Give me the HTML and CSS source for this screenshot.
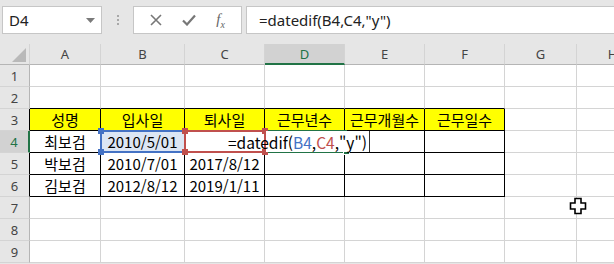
FILE: index.html
```html
<!DOCTYPE html>
<html lang="ko">
<head>
    <meta charset="UTF-8">
    <title>datedif</title>
    <link rel="stylesheet" href="styles.css">
</head>
<body>
    <div class="toolbar">
        <div class="namebox">
            <span>D4</span>
            <svg class="drop" width="9" height="5" viewBox="0 0 9 5"><path d="M0 0h9L4.5 5z" fill="#7a7a7a"/></svg>
        </div>
        <div class="grip"><i></i><i></i><i></i></div>
        <div class="fxbox">
            <svg width="12" height="12" viewBox="0 0 12 12"><path d="M1 1l10 10M11 1L1 11" stroke="#777" stroke-width="1.6"/></svg>
            <svg width="14" height="12" viewBox="0 0 14 12"><path d="M1 6.5l4 4L13 1.5" stroke="#777" stroke-width="2.2" fill="none"/></svg>
            <span class="fx">f<sub>x</sub></span>
        </div>
        <div class="formula">=datedif(B4,C4,"y")</div>
    </div>

    <div class="sheet">
        <div class="c ch corner"><svg width="14" height="14" viewBox="0 0 14 14"><path d="M14 0v14H0z" fill="#b9b9b9"/></svg></div>
        <div class="c ch">A</div><div class="c ch">B</div><div class="c ch">C</div><div class="c ch sel">D</div>
        <div class="c ch">E</div><div class="c ch">F</div><div class="c ch">G</div><div class="c ch">H</div>

        <div class="c rh">1</div>
        <div class="c"></div><div class="c"></div><div class="c"></div><div class="c"></div>
        <div class="c"></div><div class="c"></div><div class="c"></div><div class="c"></div>

        <div class="c rh">2</div>
        <div class="c tt"></div><div class="c tt"></div><div class="c tt"></div><div class="c tt"></div>
        <div class="c tt"></div><div class="c tt"></div><div class="c"></div><div class="c"></div>

        <div class="c rh rt">3</div>
        <div class="c t head">성명</div><div class="c t head">입사일</div><div class="c t head">퇴사일</div>
        <div class="c t head">근무년수</div><div class="c t head">근무개월수</div><div class="c t head">근무일수</div>
        <div class="c"></div><div class="c"></div>

        <div class="c rh rsel">4</div>
        <div class="c t">최보검</div><div class="c t ref">2010/5/01</div><div class="c t"></div>
        <div class="c t"></div><div class="c t"></div><div class="c t"></div>
        <div class="c"></div><div class="c"></div>

        <div class="c rh rt">5</div>
        <div class="c t">박보검</div><div class="c t">2010/7/01</div><div class="c t">2017/8/12</div>
        <div class="c t"></div><div class="c t"></div><div class="c t"></div>
        <div class="c"></div><div class="c"></div>

        <div class="c rh rt">6</div>
        <div class="c t">김보검</div><div class="c t">2012/8/12</div><div class="c t">2019/1/11</div>
        <div class="c t"></div><div class="c t"></div><div class="c t"></div>
        <div class="c"></div><div class="c"></div>

        <div class="c rh">7</div>
        <div class="c"></div><div class="c"></div><div class="c"></div><div class="c"></div>
        <div class="c"></div><div class="c"></div><div class="c"></div><div class="c"></div>

        <div class="c rh">8</div>
        <div class="c"></div><div class="c"></div><div class="c"></div><div class="c"></div>
        <div class="c"></div><div class="c"></div><div class="c"></div><div class="c"></div>

        <div class="c rh">9</div>
        <div class="c"></div><div class="c"></div><div class="c"></div><div class="c"></div>
        <div class="c"></div><div class="c"></div><div class="c"></div><div class="c"></div>

        <!-- range highlights while editing D4 -->
        <div class="active"><span class="handle"></span></div>
        <div class="range blue"><i class="tl"></i><i class="tr"></i><i class="bl"></i><i class="br"></i></div>
        <div class="range red"><i class="tl"></i><i class="tr"></i><i class="bl"></i><i class="br"></i></div>
        <div class="editor">=datedif(<b class="rb">B4</b>,<b class="rr">C4</b>,"y")</div>

        <svg class="cursor" width="18" height="18" viewBox="0 0 18 18">
            <path d="M6 1.5h6v4.5h4.5v6H12v4.5H6V12H1.5V6H6z" fill="#fff" stroke="#000" stroke-width="1.6"/>
        </svg>
    </div>
</body>
</html>
```

FILE: styles.css
```css
body {
    margin: 0;
    width: 614px;
    height: 264px;
    overflow: hidden;
    background-color: #e6e6e6;
    font-family: "Noto Sans", "Noto Sans CJK KR", sans-serif;
    color: #222;
}
.toolbar {
    display: flex;
    align-items: flex-start;
    height: 44px;
    padding-top: 6px;
    box-sizing: border-box;
}
.namebox {
    display: flex;
    align-items: center;
    justify-content: space-between;
    width: 100px;
    height: 28px;
    margin-left: 2px;
    padding: 0 6px 0 6px;
    box-sizing: border-box;
    background-color: #fff;
    border: 1px solid #c6c6c6;
    font-size: 15px;
}
.grip {
    width: 31px;
    height: 28px;
    display: flex;
    flex-direction: column;
    align-items: center;
    justify-content: center;
    gap: 2px;
}
.grip i {
    width: 2px;
    height: 2px;
    background-color: #a8a8a8;
}
.fxbox {
    display: flex;
    align-items: center;
    justify-content: space-around;
    width: 109px;
    height: 28px;
    padding: 0 6px;
    box-sizing: border-box;
    background-color: #fff;
    border: 1px solid #c6c6c6;
}
.fx {
    font-family: "Liberation Serif", serif;
    font-style: italic;
    font-size: 15px;
    color: #666;
}
.fx sub {
    font-size: 10px;
}
.formula {
    flex: 1;
    height: 28px;
    margin-left: 4px;
    padding-left: 12px;
    box-sizing: border-box;
    background-color: #fff;
    border: 1px solid #c6c6c6;
    border-right: none;
    font-size: 15px;
    line-height: 26px;
}

.sheet {
    position: relative;
    display: grid;
    grid-template-columns: 30px 71px 84px 80px 80px 80px 80px 72px 72px;
    grid-template-rows: 21px;
    grid-auto-rows: 22px;
    background-color: #fff;
    font-family: "Noto Sans CJK KR", sans-serif;
    font-size: 15px;
    color: #000;
}
.c {
    display: flex;
    align-items: center;
    justify-content: center;
    box-sizing: border-box;
    border-right: 1px solid #d4d4d4;
    border-bottom: 1px solid #d4d4d4;
    white-space: nowrap;
}
.ch {
    background-color: #e6e6e6;
    border-bottom-color: #b5b5b5;
    font-family: "Noto Sans", sans-serif;
    font-size: 13px;
    color: #444;
}
.ch.sel {
    background-color: #d2d2d2;
    border-bottom: 2px solid #217346;
    color: #217346;
}
.corner {
    justify-content: flex-end;
    align-items: flex-end;
    padding: 0 3px 2px 0;
}
.rh {
    background-color: #e6e6e6;
    border-right-color: #b5b5b5;
    font-family: "Noto Sans", sans-serif;
    font-size: 13px;
    color: #444;
}
.rh.rt {
    border-right-color: #000;
}
.rh.rsel {
    background-color: #d2d2d2;
    border-right: 2px solid #217346;
    color: #217346;
}
.tt {
    border-bottom-color: #000;
}
.t {
    border-right-color: #000;
    border-bottom-color: #000;
}
.head {
    background-color: #ffff00;
}
.ref {
    background-color: #dce6f4;
}

.active {
    position: absolute;
    left: 264px;
    top: 86px;
    width: 83px;
    height: 23px;
    box-sizing: border-box;
    border-top: 2px solid #217346;
    border-bottom: 2px solid #217346;
}
.handle {
    position: absolute;
    right: -3px;
    bottom: -4px;
    width: 5px;
    height: 5px;
    background-color: #217346;
    border: 1px solid #fff;
}
.range {
    position: absolute;
    top: 86px;
    height: 23px;
    box-sizing: border-box;
    border: 2px solid;
}
.range.blue {
    left: 100px;
    width: 86px;
    border-color: #4472c4;
}
.range.red {
    left: 184px;
    width: 82px;
    border-color: #c0504d;
}
.range i {
    position: absolute;
    width: 6px;
    height: 6px;
}
.range.blue i { background-color: #4472c4; }
.range.red i { background-color: #c0504d; }
.range .tl { left: -4px; top: -4px; }
.range .tr { right: -4px; top: -4px; }
.range .bl { left: -4px; bottom: -4px; }
.range .br { right: -4px; bottom: -4px; }

.editor {
    position: absolute;
    left: 266px;
    top: 87px;
    width: 104px;
    height: 21px;
    display: flex;
    align-items: center;
    justify-content: flex-end;
    padding-right: 2px;
    box-sizing: border-box;
    background-color: #fff;
    border-right: 1px solid #333;
    white-space: nowrap;
    font-size: 15.5px;
}
.editor b {
    font-weight: normal;
}
.rb { color: #4472c4; }
.rr { color: #c0504d; }

.cursor {
    position: absolute;
    left: 569px;
    top: 153px;
}
```
